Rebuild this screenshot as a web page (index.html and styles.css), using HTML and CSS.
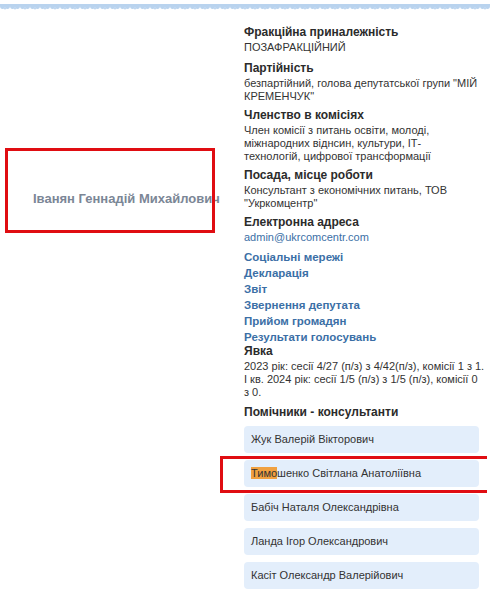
FILE: index.html
```html
<!DOCTYPE html>
<html lang="uk">
<head>
<meta charset="utf-8">
<link rel="stylesheet" href="styles.css">
</head>
<body>
<div class="strip">
  <svg width="490" height="12" xmlns="http://www.w3.org/2000/svg">
    <defs>
      <pattern id="sc" width="10" height="12" patternUnits="userSpaceOnUse">
        <path d="M0 4 H10 V6 Q10 9 7.5 9 Q5 9 5 6.5 Q5 9 2.5 9 Q0 9 0 6 Z" fill="#b9d3ee"/>
        <circle cx="5" cy="8.5" r="1" fill="#b9d3ee"/>
      </pattern>
    </defs>
    <rect width="490" height="12" fill="url(#sc)"/>
  </svg>
</div>
<div class="page">
  <div class="left">
    <div class="name">Іванян Геннадій Михайлович</div>
  </div>
  <div class="right">
    <div class="block first">
      <div class="h">Фракційна приналежність</div>
      <div class="t">ПОЗАФРАКЦІЙНИЙ</div>
    </div>
    <div class="block">
      <div class="h">Партійність</div>
      <div class="t">безпартійний, голова депутатської групи "МІЙ КРЕМЕНЧУК"</div>
    </div>
    <div class="block">
      <div class="h">Членство в комісіях</div>
      <div class="t">Член комісії з питань освіти, молоді, міжнародних віднсин, культури, ІТ-<br>технологій, цифрової трансформації</div>
    </div>
    <div class="block">
      <div class="h">Посада, місце роботи</div>
      <div class="t">Консультант з економічних питань, ТОВ "Укркомцентр"</div>
    </div>
    <div class="block">
      <div class="h">Електронна адреса</div>
      <div class="t mail">admin@ukrcomcentr.com</div>
    </div>
    <div class="links">
      <a class="lk">Соціальні мережі</a>
      <a class="lk">Декларація</a>
      <a class="lk">Звіт</a>
      <a class="lk">Звернення депутата</a>
      <a class="lk">Прийом громадян</a>
      <a class="lk">Результати голосувань</a>
    </div>
    <div class="block att">
      <div class="h">Явка</div>
      <div class="t"><span class="nw">2023 рік: сесії 4/27 (п/з) з 4/42(п/з), комісії 1 з 1.</span><br>І кв. 2024 рік: сесії 1/5 (п/з) з 1/5 (п/з), комісії 0 з 0.</div>
    </div>
    <div class="h">Помічники - консультанти</div>
    <div class="cards">
      <div class="card">Жук Валерій Вікторович</div>
      <div class="card"><span class="hl">Тимо</span>шенко Світлана Анатоліївна</div>
      <div class="card">Бабіч Наталя Олександрівна</div>
      <div class="card">Ланда Ігор Олександрович</div>
      <div class="card">Касіт Олександр Валерійович</div>
    </div>
  </div>
</div>
<div class="mark mark1"></div>
<div class="mark mark2"></div>
</body>
</html>
```
FILE: styles.css
```css
html, body {
  margin: 0;
  padding: 0;
  background: #fff;
}
body {
  width: 490px;
  height: 595px;
  overflow: hidden;
  position: relative;
  font-family: "Liberation Sans", Arial, sans-serif;
  color: #333;
}
.strip {
  height: 12px;
  line-height: 0;
}
.page {
  display: flex;
  padding-top: 12px;
}
.left {
  width: 244px;
  flex: none;
}
.name {
  margin-top: 166px;
  padding-left: 33px;
  font-size: 13px;
  font-weight: 700;
  color: #7b8696;
  white-space: nowrap;
  line-height: 18px;
}
.right {
  width: 240px;
  flex: none;
}
.block {
  margin-bottom: 4px;
}
.block.first {
  margin-bottom: 6px;
}
.block.att {
  margin-bottom: 5px;
}
.h {
  font-size: 12px;
  font-weight: 700;
  line-height: 16px;
  color: #2b2b2b;
}
.block .h {
  margin-bottom: 1px;
}
.t {
  font-size: 11px;
  line-height: 13px;
  color: #333;
}
.nw {
  white-space: nowrap;
}
.mail {
  color: #3b6fa6;
  margin-top: 1px;
}
.links {
  display: flex;
  flex-direction: column;
  margin-top: 5px;
  margin-bottom: -2px;
}
.lk {
  font-size: 11.5px;
  font-weight: 700;
  line-height: 16px;
  color: #3b6fa6;
}
.cards {
  display: flex;
  flex-direction: column;
  gap: 7px;
  margin-top: 6px;
  width: 235px;
}
.card {
  height: 27px;
  line-height: 27px;
  background: #e3eefb;
  border-radius: 4px;
  padding-left: 7px;
  font-size: 11px;
  color: #333;
}
.hl {
  background: #f0a040;
}
.mark {
  position: absolute;
  border: 3px solid #e00d12;
  box-sizing: border-box;
}
.mark1 {
  left: 5px;
  top: 148px;
  width: 210px;
  height: 85px;
}
.mark2 {
  left: 220px;
  top: 456px;
  width: 267px;
  height: 37px;
  border-right: none;
}
```
